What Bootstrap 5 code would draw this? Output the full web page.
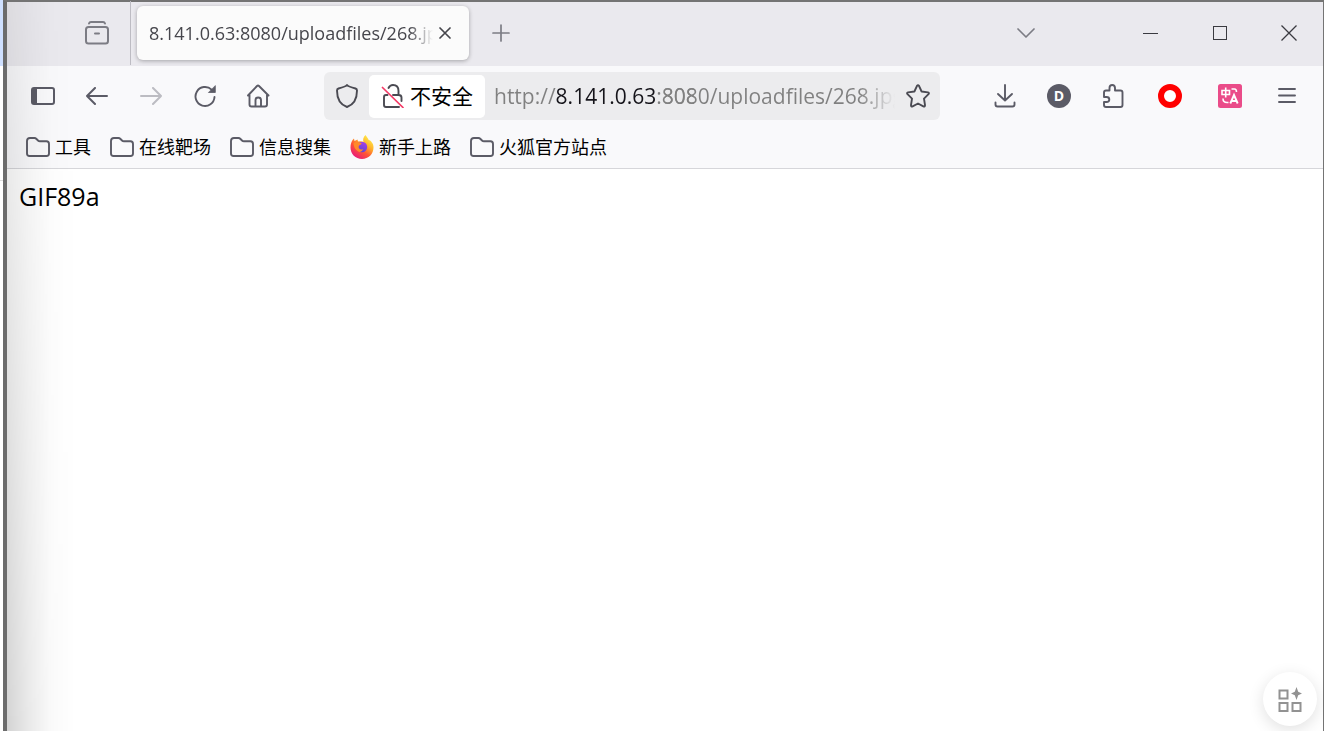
<!DOCTYPE html>
<html lang="zh-CN">
<head>
<meta charset="utf-8">
<meta name="viewport" content="width=device-width, initial-scale=1">
<title>8.141.0.63:8080/uploadfiles/268.jpg</title>
<link href="https://cdn.jsdelivr.net/npm/bootstrap@5.3.0/dist/css/bootstrap.min.css" rel="stylesheet">
<style>
  :root { --ink: #5b5b66; --edge: #747474; }
  body { font-family: "Open Sans", "Noto Sans CJK SC", sans-serif; background: #fff; color: #000; }
  svg { display: block; flex: none; }

  /* sliver of the window behind */
  .behind { width: 3px; background: linear-gradient(#cfe0ff 66px, #fff 66px, #fff 180px, #ddd 180px, #ddd 181px, #fff 181px); }
  .win { border: solid var(--edge); border-width: 2px 1px 0 4px; border-left-color: #6c6c6c; min-width: 0; }
  .win::before {
    content: ""; position: absolute; top: 0; bottom: 0; left: 0; width: 68px; pointer-events: none; z-index: 3;
    background: linear-gradient(to right, rgba(0,0,0,.17), rgba(0,0,0,.09) 30%, rgba(0,0,0,.02) 65%, transparent);
    -webkit-mask-image: linear-gradient(rgba(0,0,0,.35), #000);
    mask-image: linear-gradient(rgba(0,0,0,.35), #000);
  }

  .tool { width: 54px; height: 48px; border: 0; padding: 0; background: none; color: var(--ink); display: flex; align-items: center; justify-content: center; border-radius: 6px; flex: none; }
  .tool.wide { width: 60px; }
  .tool:disabled { color: #bcbcc2; }

  .tabstrip { height: 64px; background: #eae9ee; padding: 0 0 2px 63px; }
  .tabstrip .tool { color: #7c7c84; }
  .tabstrip .caption { width: 69px; height: 62px; color: #3a3a40; border-radius: 0; }
  .divider { width: 1px; height: 64px; background: #bdbcc3; margin: 0 6px; }
  .page-tab { width: 332px; height: 54px; background: #fbfbfb; border-radius: 6px; box-shadow: 0 1px 4px rgba(0,0,0,.3); padding-left: 12px; margin-right: 5px; }
  .tab-title { width: 284px; font-size: 18px; line-height: 26px; white-space: nowrap; overflow: hidden; color: #46464c;
    -webkit-mask-image: linear-gradient(to left, transparent, #000 24px); mask-image: linear-gradient(to left, transparent, #000 24px); }
  .page-tab .tool { width: 24px; height: 24px; color: #46464c; }
  .tab-menu { margin-right: 63px; }

  .tools { height: 60px; padding: 0 9px; background: #f9f9fb; }
  .address { height: 48px; margin: 0 38px; border-radius: 6px; background: #ececee; min-width: 0; }
  .address .tool { width: 45px; color: #4a4a52; }
  .site-state { width: 116px; height: 43px; border: 0; border-radius: 5px; background: #fff; padding: 0 0 0 12px; gap: 5px; font-size: 21px; line-height: 30px; color: #000; flex: none; }
  .url { min-width: 0; border: 0; outline: 0; padding: 0; margin-left: 9px; height: 40px; font-size: 21px; line-height: 40px;
    -webkit-text-fill-color: transparent;
    background: linear-gradient(to left, transparent, #808080 36px, #808080 230px, transparent 230px),
                linear-gradient(to right, #808080 62px, #15141a 62px, #15141a 163px, #808080 163px, #808080 200px, transparent 200px);
    -webkit-background-clip: text; background-clip: text; }

  .bookmarks { height: 43px; background: #f9f9fb; border-bottom: 1px solid #d6d6da; padding: 0 19px; gap: 19px; }
  .bookmarks a { display: flex; align-items: center; gap: 5px; font-size: 18px; line-height: 26px; color: #000; text-decoration: none; white-space: nowrap; }
  .bookmarks svg { color: var(--ink); }

  .viewer { padding: 10px 12px; }
  .viewer p { font-size: 25px; line-height: 34px; }
  .fab { position: absolute; right: 6px; bottom: 5px; width: 54px; height: 54px; border: 0; padding: 0; border-radius: 50%; background: #fff; box-shadow: 0 4px 16px rgba(0,0,0,.12); color: #929292; }
</style>
</head>
<body>
<div class="d-flex min-vh-100">
  <div class="behind flex-shrink-0"></div>
  <div class="win position-relative flex-grow-1 d-flex flex-column">

    <header class="tabstrip d-flex align-items-center">
      <button class="tool" type="button" aria-label="最近浏览">
        <svg width="24" height="24" viewBox="0 0 24 24" fill="none" stroke="currentColor" stroke-width="2" stroke-linecap="round"><rect x="1" y="6" width="22" height="16.500" rx="2.500"/><path d="M4 2.500Q4.500 1 6 1H18Q19.500 1 20 2.500M10 12.500H14"/></svg>
      </button>
      <span class="divider"></span>
      <div class="page-tab d-flex align-items-center">
        <div class="tab-title">8.141.0.63:8080/uploadfiles/268.jpg</div>
        <button class="tool" type="button" aria-label="关闭标签页">
          <svg width="12" height="12" viewBox="0 0 12 12" stroke="currentColor" stroke-width="1.700" stroke-linecap="round"><path d="M1 1 11 11M11 1 1 11"/></svg>
        </button>
      </div>
      <button class="tool" type="button" aria-label="新建标签页">
        <svg width="18" height="18" viewBox="0 0 18 18" stroke="currentColor" stroke-width="1.700" stroke-linecap="round"><path d="M9 1V17M1 9H17"/></svg>
      </button>
      <button class="tool tab-menu ms-auto" type="button" aria-label="列出所有标签页">
        <svg width="18" height="10" viewBox="0 0 18 10" fill="none" stroke="currentColor" stroke-width="1.700" stroke-linecap="round" stroke-linejoin="round"><path d="M1 1 9 9 17 1"/></svg>
      </button>
      <button class="tool caption" type="button" aria-label="最小化">
        <svg width="15" height="15" viewBox="0 0 15 15" stroke="currentColor"><path d="M0 7.500H15"/></svg>
      </button>
      <button class="tool caption" type="button" aria-label="最大化">
        <svg width="14" height="14" viewBox="0 0 14 14" fill="none" stroke="currentColor"><rect x=".5" y=".5" width="13" height="13"/></svg>
      </button>
      <button class="tool caption" type="button" aria-label="关闭">
        <svg width="16" height="16" viewBox="0 0 16 16" stroke="currentColor" stroke-width="1.300"><path d="M.5 .5 15.500 15.500M15.500 .5 .5 15.500"/></svg>
      </button>
    </header>

    <nav class="tools d-flex align-items-center" aria-label="工具栏">
      <button class="tool" type="button" aria-label="侧栏">
        <svg width="24" height="18" viewBox="0 0 24 18" fill="none" stroke="currentColor" stroke-width="2"><rect x="1" y="1" width="22" height="16" rx="2"/><path d="M1 2H6V16H1Z" fill="currentColor" stroke="none"/></svg>
      </button>
      <button class="tool" type="button" aria-label="后退">
        <svg width="22" height="18" viewBox="0 0 22 18" fill="none" stroke="currentColor" stroke-width="2" stroke-linecap="round" stroke-linejoin="round"><path d="M21 9H1M9 1 1 9 9 17"/></svg>
      </button>
      <button class="tool" type="button" aria-label="前进" disabled>
        <svg width="22" height="18" viewBox="0 0 22 18" fill="none" stroke="currentColor" stroke-width="2" stroke-linecap="round" stroke-linejoin="round"><path d="M1 9H21M13 1 21 9 13 17"/></svg>
      </button>
      <button class="tool" type="button" aria-label="刷新">
        <svg width="22" height="22" viewBox="0 0 22 22" fill="none" stroke="currentColor" stroke-width="1.900" stroke-linecap="round"><path d="M17.600 4.600A9.500 9.500 0 1 0 20.500 12"/><path d="M21.300 1V7.500H14.800Z" fill="currentColor" stroke-width=".8" stroke-linejoin="round"/></svg>
      </button>
      <button class="tool" type="button" aria-label="主页">
        <svg width="24" height="24" viewBox="0 0 24 24" fill="none" stroke="currentColor" stroke-width="1.900" stroke-linecap="round" stroke-linejoin="round"><path d="M1 11.500 10 2Q11 1 12 2L21.500 11.500M2.500 10V20.500Q2.500 22.500 4.500 22.500H18Q20 22.500 20 20.500V10M8.500 22V16Q8.500 13.500 11.200 13.500T14 16V22"/></svg>
      </button>

      <div class="address d-flex align-items-center flex-grow-1">
        <button class="tool" type="button" aria-label="跟踪保护">
          <svg width="22" height="24" viewBox="0 0 22 24" fill="none" stroke="currentColor" stroke-width="1.900" stroke-linejoin="round"><path d="M11 1Q12 2.500 19.500 4.500Q21 5 21 6.500C21 14 18 20.500 11 23C4 20.500 1 14 1 6.500Q1 5 2.500 4.500Q10 2.500 11 1Z"/></svg>
        </button>
        <button class="site-state d-flex align-items-center" type="button">
          <svg width="24" height="24" viewBox="0 0 24 24" fill="none" stroke="#4a4a52" stroke-width="1.900" stroke-linecap="round"><path d="M7.500 4Q9 1 12 1Q17.500 1 17.500 7V11Q20.500 11 20.500 13.500V17M6.500 11H5Q3 11 3 13V21Q3 23 5 23H18M12 11H17.500"/><path d="M1.500 3.500 22 23.500" stroke="#f43b67" stroke-width="1.700"/></svg>
          <span>不安全</span>
        </button>
        <input class="url flex-grow-1" type="text" aria-label="地址" spellcheck="false" value="http://8.141.0.63:8080/uploadfiles/268.jpg">
        <button class="tool" type="button" aria-label="添加书签">
          <svg width="24" height="24" viewBox="0 0 24 24" fill="none" stroke="currentColor" stroke-width="1.900" stroke-linejoin="round"><path d="M11 1.900Q12 .4 13 1.900L15.600 7.500 22 8.400Q23.500 8.900 22.500 10.100L18 14.600 19 21.200Q18.900 23 17.400 22.400L12 19.500 6.600 22.400Q5.100 23 5 21.200L6 14.600 1.500 10.100Q.5 8.900 2 8.400L8.400 7.500Z"/></svg>
        </button>
      </div>

      <button class="tool" type="button" aria-label="下载">
        <svg width="22" height="24" viewBox="0 0 22 24" fill="none" stroke="currentColor" stroke-width="1.900" stroke-linecap="round" stroke-linejoin="round"><path d="M11 1V16M4 10 11 16.500 18 10M1.500 18.500V20.500Q1.500 22.500 3.500 22.500H18.500Q20.500 22.500 20.500 20.500V18.500"/></svg>
      </button>
      <button class="tool" type="button" aria-label="账户">
        <svg width="24" height="24" viewBox="0 0 24 24"><circle cx="12" cy="12" r="12" fill="currentColor"/><text x="12" y="17" text-anchor="middle" font-family="Open Sans, sans-serif" font-size="14" font-weight="700" fill="#fff">D</text></svg>
      </button>
      <button class="tool" type="button" aria-label="扩展">
        <svg width="22" height="24" viewBox="0 0 22 24" fill="none" stroke="currentColor" stroke-width="1.900" stroke-linejoin="round"><path d="M2 13V8.500Q2 6.500 4 6.500H7.500V4Q7.500 1 10.200 1T13 4V6.500H18.500Q20.500 6.500 20.500 8.500V21Q20.500 23 18.500 23H4Q2 23 2 21V18H4.500Q7.300 18 7.300 15.500T4.500 13Z"/></svg>
      </button>
      <button class="tool wide" type="button" aria-label="代理">
        <svg width="24" height="24" viewBox="0 0 24 24"><circle cx="12" cy="12" r="9" fill="#fff" stroke="red" stroke-width="6"/></svg>
      </button>
      <button class="tool wide" type="button" aria-label="翻译">
        <svg width="24" height="24" viewBox="0 0 24 24" fill="none" stroke="#fff" stroke-width="1.600"><rect width="24" height="24" rx="2.500" fill="#ea4c89" stroke="none"/><path d="M4 6.500H11.500V10.500H4ZM7.700 3.500V13.500M13.500 5H16.500Q18.500 5 18.500 8M5 14.500Q5 18.500 9 18.500H10.500"/><path d="M12.300 19.500 16 11 19.700 19.500M13.800 17H18.200" stroke-width="1.900"/></svg>
      </button>
      <button class="tool" type="button" aria-label="菜单">
        <svg width="18" height="18" viewBox="0 0 18 18" stroke="currentColor" stroke-width="1.900" stroke-linecap="round"><path d="M1 2H17M1 8.500H17M1 15H17"/></svg>
      </button>
    </nav>

    <nav class="bookmarks d-flex align-items-center" aria-label="书签">
      <svg class="d-none"><symbol id="folder" viewBox="0 0 24 20"><path d="M1 4Q1 1 4 1H8.500Q9.500 1 10.500 2L12 3.500Q12.800 4.300 14 4.300H20.500Q23 4.300 23 7V16.500Q23 19 20.500 19H3.500Q1 19 1 16.500Z" fill="none" stroke="currentColor" stroke-width="1.900"/></symbol></svg>
      <a href="#"><svg width="24" height="20"><use href="#folder"/></svg>工具</a>
      <a href="#"><svg width="24" height="20"><use href="#folder"/></svg>在线靶场</a>
      <a href="#"><svg width="24" height="20"><use href="#folder"/></svg>信息搜集</a>
      <a href="#">
        <svg width="24" height="24" viewBox="0 0 24 24">
          <defs>
            <linearGradient id="flame" x1=".85" y1=".05" x2=".2" y2=".95"><stop offset="0" stop-color="#fff44f"/><stop offset=".35" stop-color="#ffb02a"/><stop offset=".62" stop-color="#ff5634"/><stop offset="1" stop-color="#e8187c"/></linearGradient>
            <linearGradient id="globe" x1=".7" y1="0" x2=".3" y2="1"><stop offset="0" stop-color="#a640e8"/><stop offset="1" stop-color="#5b43d0"/></linearGradient>
          </defs>
          <path d="M15.500 0C17 2 18 3.500 18.700 5C20 5 21 6 21.500 7C23 8.500 23.500 10.500 23.500 12.500C23.500 19 18.500 24 12 24S.5 19 .5 12.500C.5 9 1.500 6.500 3 4.500L4 3.500L4.500 6L7.500 4.500L8 6.500Q12 6 13.500 7C12.500 4.500 13.500 2 15.500 0Z" fill="url(#flame)"/>
          <circle cx="12" cy="12" r="5.200" fill="url(#globe)"/>
          <path d="M3.500 8Q6 6.500 8 6.700Q9.500 8 11.700 8.200Q11.500 9.700 9.300 10.300Q8.200 11.500 8.800 13Q10.500 15.500 13.500 14Q11 18.500 7.500 16Q3.500 13 3.500 8Z" fill="#ff8a2a"/>
        </svg>新手上路</a>
      <a href="#"><svg width="24" height="20"><use href="#folder"/></svg>火狐官方站点</a>
    </nav>

    <main class="viewer flex-grow-1">
      <p class="m-0">GIF89a</p>
    </main>

    <button class="fab d-flex align-items-center justify-content-center" type="button" aria-label="快捷工具">
      <svg width="24" height="26" viewBox="0 0 24 26" fill="none" stroke="currentColor" stroke-width="2"><path d="M1.500 4.500H9.500V12.500H1.500ZM1.500 17H9.500V25H1.500ZM14.500 17H22.500V25H14.500Z"/><path d="M18.500 1 20.200 5.800 24 7.500 20.200 9.200 18.500 14 16.800 9.200 13 7.500 16.800 5.800Z" fill="currentColor" stroke="none"/></svg>
    </button>
  </div>
</div>
<script src="https://cdn.jsdelivr.net/npm/bootstrap@5.3.0/dist/js/bootstrap.bundle.min.js"></script>
</body>
</html>
